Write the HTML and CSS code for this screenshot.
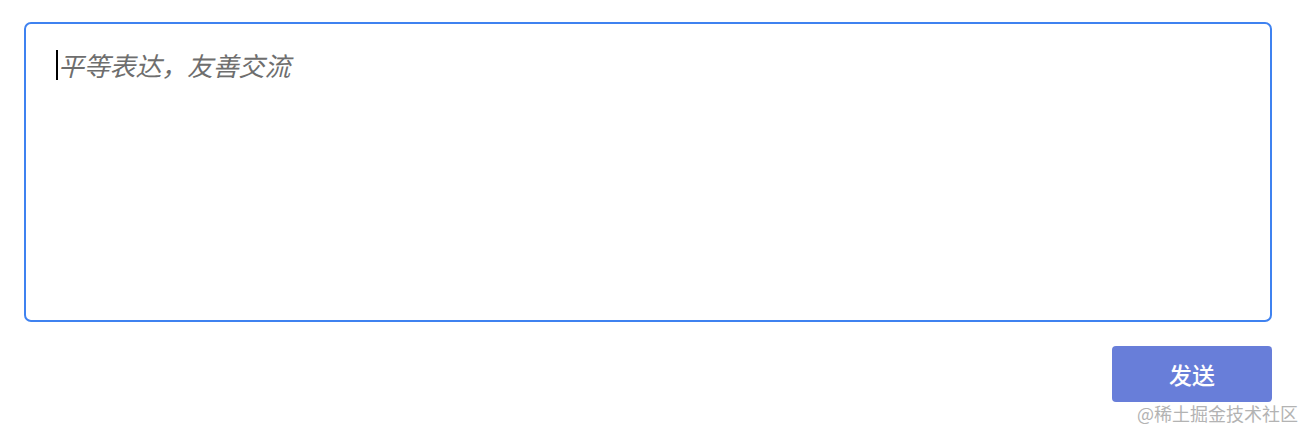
FILE: index.html
```html
<!DOCTYPE html>
<html lang="zh">
<head>
<meta charset="utf-8">
<title>评论</title>
<link rel="stylesheet" href="styles.css">
</head>
<body>
<div class="page">
  <div class="editor">
    <div class="line"><span class="caret"></span><span class="placeholder">平等表达，友善交流</span></div>
  </div>
  <div class="actions">
    <button class="send">发送</button>
  </div>
</div>
<div class="watermark">@稀土掘金技术社区</div>
</body>
</html>
```

FILE: styles.css
```css
html, body {
  margin: 0;
  padding: 0;
  background: #ffffff;
}
body {
  font-family: "Noto Sans CJK SC", "Noto Sans", sans-serif;
  position: relative;
  width: 1304px;
  height: 430px;
  overflow: hidden;
}
.page {
  padding: 22px 32px 0 24px;
  display: flex;
  flex-direction: column;
}
.editor {
  box-sizing: border-box;
  width: 1248px;
  height: 300px;
  border: 2px solid #3f82f0;
  border-radius: 7px;
  padding: 25px 30px;
}
.line {
  display: flex;
  align-items: center;
  height: 32px;
}
.caret {
  display: inline-block;
  width: 2px;
  height: 30px;
  background: #000;
}
.placeholder {
  font-size: 26px;
  font-style: italic;
  color: #6e6e6e;
  line-height: 32px;
  letter-spacing: -0.2px;
}
.actions {
  display: flex;
  justify-content: flex-end;
  margin-top: 24px;
}
.send {
  width: 160px;
  height: 56px;
  border: none;
  border-radius: 4px;
  background: #687ed9;
  color: #ffffff;
  font-family: "Noto Sans CJK SC", sans-serif;
  font-size: 23px;
  font-weight: 500;
  padding: 0;
}
.watermark {
  position: absolute;
  right: 6px;
  bottom: 5px;
  font-family: "Noto Sans CJK SC", sans-serif;
  font-size: 18px;
  line-height: 24px;
  color: #b3b3b3;
}
```
